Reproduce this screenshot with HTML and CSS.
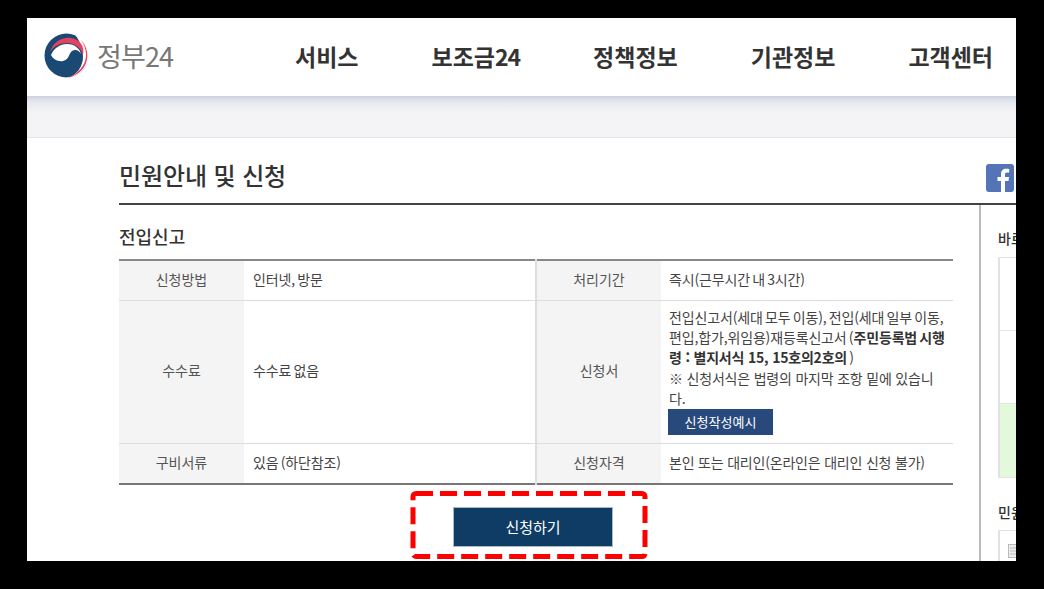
FILE: index.html
```html
<!DOCTYPE html>
<html lang="ko">
<head>
<meta charset="utf-8">
<title>민원안내 및 신청</title>
<link rel="stylesheet" href="styles.css">
</head>
<body>
<div class="frame">
  <header class="header">
    <a class="logo">
      <svg class="logo-mark" width="46" height="46" viewBox="0 0 46 46">
        <circle cx="22.5" cy="22.5" r="22" fill="#1a4a73"/>
        <path d="M31 1.500C42 6 46 14 45 24C44 35 34 45 22 45C33 43 39 33 39 24C39 14 35 7 31 1.500Z" fill="#fff"/>
        <path d="M37 7C46 16 46 33 33 41C30 43 27 44 24 45C33 41 42 33 42 22C42 16 40 11 37 7Z" fill="#e8405f"/>
        <path d="M6 19C9 9 18 4 27 5C36 6 41 14 39 22C37 15 31 10 23 10C16 10 10 13 6 19Z" fill="#e8405f"/>
        <path d="M7 22C10 15 16 11 23 11C31 11 36 16 37 21C35 17 31 16 28 18C25 20 25 27 19 28C14 29 9 26 7 22Z" fill="#fff"/>
      </svg>
      <span class="logo-text">정부24</span>
    </a>
    <nav class="nav">
      <a>서비스</a><a>보조금<span class="num">24</span></a><a>정책정보</a><a>기관정보</a><a>고객센터</a>
    </nav>
  </header>
  <div class="band"></div>
  <main class="content">
    <div class="title-row">
      <h1>민원안내 및 신청</h1>
      <svg class="fb" width="28" height="28" viewBox="0 0 28 28">
        <rect width="28" height="28" rx="3" fill="#5574b8"/>
        <path d="M19 28V17h3.500l.5-4h-4v-2.500c0-1.200.4-2 2-2h2.200V5c-.5-.1-1.700-.2-3.100-.2-3.100 0-5.100 1.900-5.100 5.300V13h-3.500v4H15v11z" fill="#fff"/>
      </svg>
    </div>
    <div class="columns">
      <section class="main-col">
        <h2>전입신고</h2>
        <table class="info">
          <colgroup><col class="c-th"><col class="c-td"><col class="c-th2"><col class="c-td2"></colgroup>
          <tr class="r1">
            <th>신청방법</th><td>인터넷, 방문</td>
            <th class="mid">처리기간</th><td class="right">즉시(근무시간 내 3시간)</td>
          </tr>
          <tr class="r2">
            <th>수수료</th><td>수수료 없음</td>
            <th class="mid">신청서</th>
            <td class="right form-cell">전입신고서(세대 모두 이동), 전입(세대 일부 이동,<br>편입,합가,위임용)재등록신고서 (<b>주민등록법 시행</b><br><b class="natural">령 : 별지서식 15, 15호의2호의</b> )<br><span class="natural">※ 신청서식은 법령의 마지막 조항 밑에 있습니<br>다.</span><br><a class="sample">신청작성예시</a></td>
          </tr>
          <tr class="r3">
            <th>구비서류</th><td>있음 (하단참조)</td>
            <th class="mid">신청자격</th><td class="right natural">본인 또는 대리인(온라인은 대리인 신청 불가)</td>
          </tr>
        </table>
        <div class="apply-wrap">
          <a class="apply">신청하기</a>
          <svg class="dash" width="240" height="71" viewBox="0 0 240 71">
            <rect x="4" y="3.500" width="232" height="63" rx="3" fill="none" stroke="#f00" stroke-width="5" stroke-dasharray="17 7"/>
          </svg>
        </div>
      </section>
      <aside class="side">
        <h3>바로가기</h3>
        <ul class="quick">
          <li></li><li></li><li class="green"></li>
        </ul>
        <h3 class="h-second">민원상담</h3>
        <div class="side-box">
          <svg width="10" height="14" viewBox="0 0 10 14"><rect x=".5" y=".5" width="9" height="13" fill="#eee" stroke="#bbb"/><path d="M2 4h6M2 7h6M2 10h6" stroke="#bbb"/></svg>
        </div>
      </aside>
    </div>
  </main>
</div>
</body>
</html>
```
FILE: styles.css
```css
* { box-sizing: border-box; }
html, body { margin: 0; height: 100%; }
body {
  background: #000;
  padding: 18px 28px 28px 27px;
  font-family: "Noto Sans CJK KR", "Noto Sans", sans-serif;
  font-size: 14px;
  color: #444;
  overflow: hidden;
}
.frame {
  height: 543px;
  width: 989px;
  background: #fff;
  overflow: hidden;
  display: flex;
  flex-direction: column;
}
.header {
  height: 78px;
  flex: none;
  display: flex;
  align-items: center;
  padding-left: 17px;
  position: relative;
  z-index: 1;
  background: #fff;
}
.logo { display: flex; align-items: center; width: 251px; gap: 7px; margin-top: -3px; }
.logo-mark { flex: none; }
.logo-text { font-size: 27px; letter-spacing: -.9px; color: #777; line-height: 1; margin-top: -1px; }
.nav { display: flex; gap: 73px; font-size: 23px; font-weight: 700; color: #333; white-space: nowrap; letter-spacing: 0; margin-top: -3px; }
.num { letter-spacing: -1px; }
.band {
  height: 42px;
  flex: none;
  background: linear-gradient(#ccd2e0, #e6e8ee 6px, #f4f3f5 16px);
  border-bottom: 1px solid #e6e6e8;
}
.content { padding-left: 92px; flex: 1; min-height: 0; display: flex; flex-direction: column; }
.title-row { height: 67px; flex: none; display: flex; justify-content: space-between; padding-top: 26px; border-bottom: 2px solid #444; white-space: nowrap; }
h1 { margin: -7px 0 0; font-size: 24px; font-weight: 500; line-height: 36px; color: #333; letter-spacing: -.1px; }
.fb { flex: none; margin-right: 2px; }
.columns { flex: 1; min-height: 0; display: flex; }
.main-col { width: 862px; flex: none; border-right: 2px solid #bbb; padding-right: 27px; }
h2 { margin: 18px 0 10px; font-size: 18px; font-weight: 500; line-height: 26px; color: #333; }
.info { width: 834px; border-collapse: collapse; table-layout: fixed; border-top: 2px solid #888; border-bottom: 2px solid #777; line-height: 20.4px; }
.c-th { width: 125px; } .c-td { width: 292px; } .c-th2 { width: 125px; } .c-td2 { width: 292px; }
.info tr { border-bottom: 1px solid #ddd; }
.info tr.r3 { border-bottom: 0; }
.r1 { height: 40px; } .r2 { height: 143px; } .r3 { height: 41px; }
.info th { background: #f4f4f4; font-weight: 400; color: #555; padding: 0 0 2px; }
.info th.mid { border-left: 2px solid #ddd; }
.info td { padding: 0 4px 2px 9px; color: #444; letter-spacing: -.15px; word-spacing: -1.5px; }
.info td.right { padding-left: 8px; white-space: nowrap; }
.info td.natural, .natural { word-spacing: 0; letter-spacing: -.2px; }
.info b { font-weight: 700; color: #333; }
.info td.form-cell { vertical-align: top; padding-top: 6px; padding-bottom: 7px; }
.sample { display: inline-block; width: 105px; height: 26px; line-height: 25px; margin-left: -1px; background: #28497c; color: #fff; text-align: center; font-size: 13px; letter-spacing: 0; word-spacing: 0; vertical-align: top; }
.apply-wrap { position: relative; display: flex; justify-content: center; padding-top: 22px; margin-left: -5px; }
.apply { display: block; width: 160px; height: 40px; line-height: 38px; background: #0f3c65; border: 1px solid #a9b8c6; color: #fff; text-align: center; font-size: 15px; }
.dash { position: absolute; left: 295px; top: 5px; }
.side { padding-left: 17px; width: 120px; flex: none; }
h3 { margin: 21px 0 6px; font-size: 14px; font-weight: 500; line-height: 25px; color: #333; white-space: nowrap; }
.h-second { margin: 22px 0 5px; }
.quick { list-style: none; margin: 0; padding: 0; border: 1px solid #e2e2e2; border-left-width: 2px; }
.quick li { height: 73px; border-bottom: 1px solid #e6e6e6; }
.quick li.green { background: #e2f9dc; border-bottom: 0; }
.side-box { border: 1px solid #e2e2e2; border-left-width: 2px; height: 60px; padding: 13px 0 0 8px; }
.side-box svg { display: block; }
```
